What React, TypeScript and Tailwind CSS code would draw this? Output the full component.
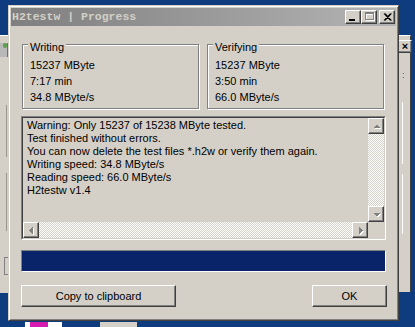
import React from 'react';

const raised =
  'bg-[#d4d0c8] border border-t-white border-l-white border-r-[#404040] border-b-[#404040] shadow-[inset_-1px_-1px_0_#808080]';
const checker =
  'bg-[conic-gradient(#ffffff_25%,#d4d0c8_0_50%,#ffffff_0_75%,#d4d0c8_0)] bg-[length:2px_2px]';

const arrows: Record<string, string> = {
  up: '1,6 4.5,2.5 8,6',
  down: '1,3 8,3 4.5,6.5',
  left: '5.5,1 5.5,8 2,4.5',
  right: '3,1 3,8 6.5,4.5',
};

// disabled arrow: grey with white drop shadow
const Arrow: React.FC<{ dir: string }> = ({ dir }) => (
  <svg width="9" height="9" viewBox="0 0 9 9" shapeRendering="crispEdges">
    <polygon points={arrows[dir]} fill="#ffffff" transform="translate(1 1)" />
    <polygon points={arrows[dir]} fill="#808080" />
  </svg>
);

const ScrollButton: React.FC<{ dir: string }> = ({ dir }) => (
  <div className={`${raised} w-[16px] h-[16px] flex items-center justify-center shrink-0`}>
    <Arrow dir={dir} />
  </div>
);

const GroupBox: React.FC<{ title: string; lines: string[] }> = ({ title, lines }) => (
  <div className="relative w-[177px] h-[65px] border border-[#808080] shadow-[inset_1px_1px_0_#fff,1px_1px_0_#fff] pl-[7px] pt-[12px] leading-[16px]">
    <span className="absolute -top-[5px] left-[5px] px-[2px] bg-[#d4d0c8] leading-[14px]">{title}</span>
    {lines.map((line) => (
      <div key={line}>{line}</div>
    ))}
  </div>
);

const logLines = [
  'Warning: Only 15237 of 15238 MByte tested.',
  'Test finished without errors.',
  'You can now delete the test files *.h2w or verify them again.',
  'Writing speed: 34.8 MByte/s',
  'Reading speed: 66.0 MByte/s',
  'H2testw v1.4',
];

export default function App() {
  return (
    <div className="relative w-[415px] h-[327px] overflow-hidden bg-[#0e3c7e] font-['Liberation_Sans',Arial,sans-serif] text-[11px] text-black">
      {/* window behind, left */}
      <div className="absolute left-0 top-[35px] w-[12px] h-[258px] bg-[#d4d0c8] border-t border-white">
        <div className="mt-[2px] w-[8px] h-[14px] bg-[#b8b8b8] border-r border-[#707070]">
          <div className="ml-[3px] mt-[7px] w-[4px] h-[5px] rounded-full bg-[#5ca04a]" />
        </div>
        <div className="ml-[6px] mt-[48px] w-px h-[52px] bg-[#9a9890]" />
        <div className="ml-[6px] mt-[16px] w-px h-[58px] bg-[#9a9890]" />
        <div className="ml-[4px] mt-[26px] w-[4px] h-[18px] border border-r-0 border-[#808080]" />
      </div>

      {/* window behind, right */}
      <div className="absolute left-[394px] top-[35px] w-[17px] h-[257px] bg-[#d4d0c8] border-t border-white border-r border-r-[#404040]">
        <div className={`${raised} ml-[4px] mt-[4px] w-[14px] h-[13px] flex items-center justify-center`}>
          <span className="text-[11px] font-bold leading-none">×</span>
        </div>
        <div className="ml-[8px] mt-[18px] text-[9px] leading-none text-[#2050b0]">:</div>
        <div className="ml-[8px] mt-[22px] w-px h-[62px] bg-white" />
        <div className="ml-[8px] mt-[10px] w-px h-[60px] bg-white" />
      </div>

      {/* desktop icons peeking at bottom */}
      <div className="absolute left-[25px] top-[322px] w-[37px] h-[5px] bg-white">
        <div className="ml-[5px] w-[18px] h-[5px] bg-[#d81bb0]" />
      </div>
      <div className="absolute left-[100px] top-[322px] w-[37px] h-[5px] bg-[#d4d0c8]" />

      {/* main window */}
      <div className="absolute left-[8px] top-[5px] w-[391px] h-[316px] bg-[#d4d0c8] border border-t-[#d4d0c8] border-l-[#d4d0c8] border-r-[#404040] border-b-[#404040] shadow-[inset_1px_1px_0_#fff,inset_-1px_-1px_0_#808080] p-[2px] flex flex-col">
        <div className="h-[18px] flex items-center justify-between pl-[1px] pr-[1px] bg-gradient-to-r from-[#7f7f7f] to-[#b4b4b4]">
          <span className="font-['Liberation_Mono',monospace] font-bold text-[11.5px] text-[#d4d0c8] whitespace-pre leading-none">
            H2testw | Progress
          </span>
          <div className="flex items-center">
            <div className={`${raised} w-[16px] h-[14px] relative`}>
              <div className="absolute left-[3px] top-[8px] w-[6px] h-[2px] bg-black" />
            </div>
            <div className={`${raised} w-[16px] h-[14px] flex items-center justify-center`}>
              <svg width="11" height="10" viewBox="0 0 11 10" shapeRendering="crispEdges">
                <rect x="2.5" y="1.5" width="8" height="7" fill="none" stroke="#ffffff" />
                <rect x="2" y="1" width="8" height="2" fill="#ffffff" />
                <rect x="1.5" y="0.5" width="8" height="7" fill="none" stroke="#808080" />
                <rect x="1" y="0" width="9" height="2" fill="#808080" />
              </svg>
            </div>
            <div className={`${raised} ml-[2px] w-[16px] h-[14px] flex items-center justify-center`}>
              <svg width="9" height="8" viewBox="0 0 9 8">
                <path d="M1 0.5 L7.5 7.5 M2 0.5 L8.5 7.5 M7.5 0.5 L1 7.5 M8.5 0.5 L2 7.5" stroke="#000" strokeWidth="1.1" />
              </svg>
            </div>
          </div>
        </div>

        <div className="flex flex-col px-[10px]">
          <div className="mt-[18px] ml-[1px] flex gap-[8px]">
            <GroupBox title="Writing" lines={['15237 MByte', '7:17 min', '34.8 MByte/s']} />
            <GroupBox title="Verifying" lines={['15237 MByte', '3:50 min', '66.0 MByte/s']} />
          </div>

          <div className="mt-[7px] h-[124px] border border-t-[#808080] border-l-[#808080] border-r-white border-b-white">
            <div className="h-full border border-t-[#404040] border-l-[#404040] border-r-[#d4d0c8] border-b-[#d4d0c8] grid grid-cols-[1fr_16px] grid-rows-[1fr_16px]">
              <div className="pl-[4px] pt-[1px] leading-[13px] overflow-hidden whitespace-nowrap">
                {logLines.map((line) => (
                  <div key={line}>{line}</div>
                ))}
              </div>
              <div className="flex flex-col">
                <ScrollButton dir="up" />
                <div className={`flex-1 ${checker}`} />
                <ScrollButton dir="down" />
              </div>
              <div className="flex">
                <ScrollButton dir="left" />
                <div className={`flex-1 ${checker}`} />
                <ScrollButton dir="right" />
              </div>
              <div className="bg-[#d4d0c8]" />
            </div>
          </div>

          <div className="mt-[10px] h-[22px] border border-t-[#808080] border-l-[#808080] border-r-white border-b-white">
            <div className="h-full bg-[#0a246a]" />
          </div>

          <div className="mt-[13px] flex justify-between">
            <button className={`${raised} w-[155px] h-[22px] leading-none`}>Copy to clipboard</button>
            <button className={`${raised} w-[75px] h-[22px] -mr-[1px] leading-none`}>OK</button>
          </div>
        </div>
      </div>
    </div>
  );
}
